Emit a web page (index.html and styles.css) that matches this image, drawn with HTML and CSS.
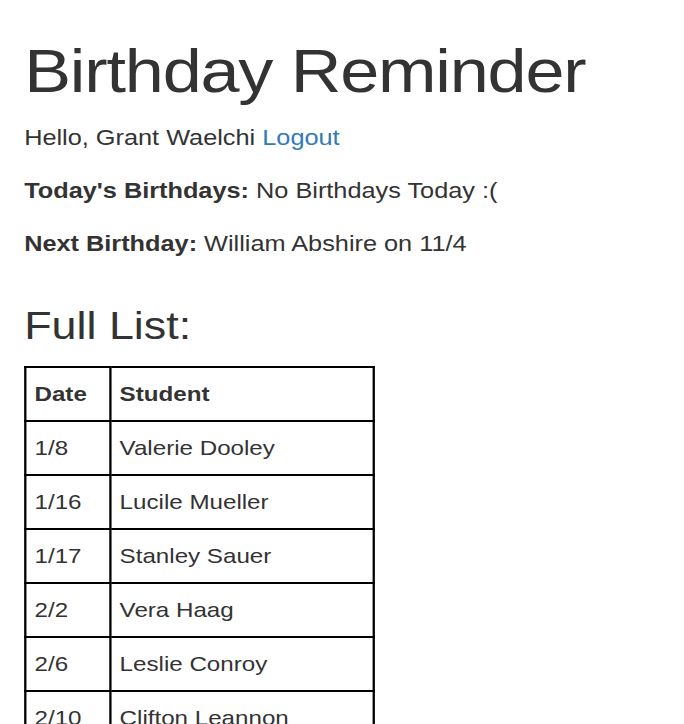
FILE: index.html
```html
<!DOCTYPE html>
<html lang="en">
<head>
<meta charset="utf-8">
<title>Birthday Reminder</title>
<link rel="stylesheet" href="styles.css">
</head>
<body>
<div class="page">
  <h1 class="title">Birthday Reminder</h1>
  <p class="line">Hello, Grant Waelchi <a class="link" href="#">Logout</a></p>
  <p class="line"><strong>Today's Birthdays:</strong> No Birthdays Today :(</p>
  <p class="line"><strong>Next Birthday:</strong> William Abshire on 11/4</p>
  <h3 class="subtitle">Full List:</h3>
  <table class="list">
    <thead>
      <tr><th class="c-date">Date</th><th class="c-name">Student</th></tr>
    </thead>
    <tbody>
      <tr><td>1/8</td><td>Valerie Dooley</td></tr>
      <tr><td>1/16</td><td>Lucile Mueller</td></tr>
      <tr><td>1/17</td><td>Stanley Sauer</td></tr>
      <tr><td>2/2</td><td>Vera Haag</td></tr>
      <tr><td>2/6</td><td>Leslie Conroy</td></tr>
      <tr><td>2/10</td><td>Clifton Leannon</td></tr>
    </tbody>
  </table>
</div>
</body>
</html>
```

FILE: styles.css
```css
html, body {
  margin: 0;
  overflow: hidden;
}
body {
  font-family: "Liberation Sans", Arial, Helvetica, sans-serif;
  color: #333;
  background: #fff;
}
.page {
  width: 570px;
  padding: 0 0 0 21px;
  transform: scaleX(1.15);
  transform-origin: 0 0;
}
.title {
  font-size: 61px;
  font-weight: normal;
  line-height: 66px;
  letter-spacing: -1px;
  margin: 38px 0 19px;
}
.line {
  font-size: 22px;
  line-height: 30px;
  margin: 0 0 23px;
}
.line strong {
  font-weight: bold;
}
.link {
  color: #337ab7;
  text-decoration: none;
}
.subtitle {
  font-size: 39px;
  font-weight: normal;
  line-height: 42px;
  margin: 46px 0 19px;
}
.list {
  border-collapse: collapse;
  border: 2px solid #000;
  font-size: 21px;
  line-height: 30px;
}
.list th,
.list td {
  border: 2px solid #000;
  padding: 11px 6px 11px 7px;
  text-align: left;
  vertical-align: top;
}
.list th {
  font-weight: bold;
}
.c-date {
  width: 59px;
}
.c-name {
  width: 214px;
}
```
